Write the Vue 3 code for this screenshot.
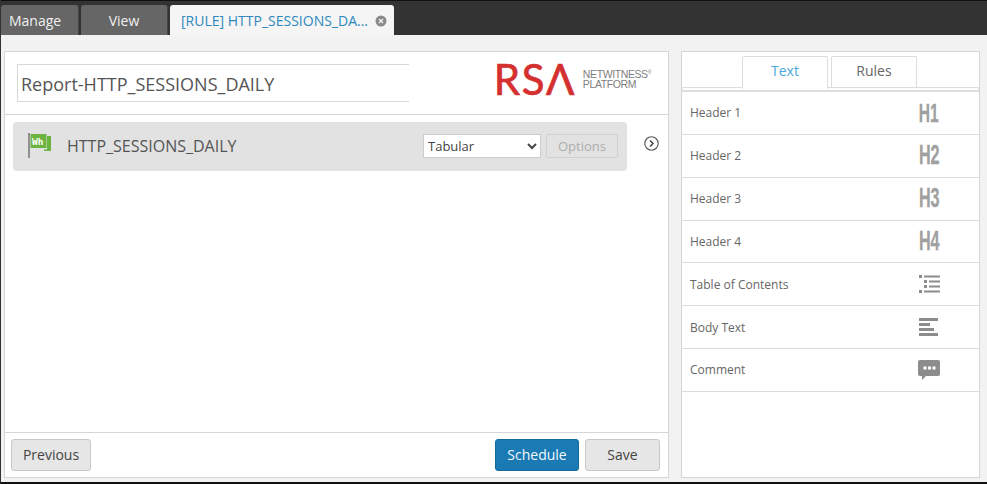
<script setup>
const rows = [
  { label: 'Header 1', h: 'H1', small: true },
  { label: 'Header 2', h: 'H2' },
  { label: 'Header 3', h: 'H3' },
  { label: 'Header 4', h: 'H4' },
  { label: 'Table of Contents', icon: 'toc' },
  { label: 'Body Text', icon: 'body' },
  { label: 'Comment', icon: 'comment' },
]
</script>

<template>
  <div class="page">
    <nav class="topbar">
      <div class="tab dark manage">Manage</div>
      <div class="tab dark view">View</div>
      <div class="tab active">
        <span>[RULE] HTTP_SESSIONS_DA...</span>
        <svg class="close" width="12" height="12" viewBox="0 0 12 12">
          <circle cx="6" cy="6" r="5.5" fill="#8a8a8a" />
          <path d="M4 4l4 4M8 4l-4 4" stroke="#eee" stroke-width="1.4" />
        </svg>
      </div>
    </nav>
    <main class="content">
      <section class="panel left">
        <header class="head">
          <div class="title">Report-HTTP_SESSIONS_DAILY</div>
          <div class="logo">
            <span class="rsa">RSΛ</span>
            <span class="nw">NETWITNESS<sup>®</sup><br />PLATFORM</span>
          </div>
        </header>
        <div class="work">
          <div class="strip">
            <div class="item">
              <svg class="flag" width="24" height="25" viewBox="0 0 24 25">
                <rect x="0" y="0" width="2" height="25" fill="#8f8f8f" />
                <path d="M19 3h4v15H16v-1.500h3z" fill="#6db33f" />
                <rect x="2.500" y="1" width="16" height="14" fill="#6db33f" />
                <text x="4" y="11.500" class="wh">Wh</text>
              </svg>
              <span class="name">HTTP_SESSIONS_DAILY</span>
              <select class="sel"><option>Tabular</option></select>
              <button class="opt" type="button" disabled>Options</button>
            </div>
            <svg class="chev" width="15" height="15" viewBox="0 0 15 15">
              <circle cx="7.500" cy="7.500" r="6.700" fill="none" stroke="#555" stroke-width="1.100" />
              <path d="M6 4.500l3 3-3 3" fill="none" stroke="#444" stroke-width="1.500" />
            </svg>
          </div>
        </div>
        <footer class="foot">
          <button class="btn" type="button">Previous</button>
          <span class="spacer"></span>
          <button class="btn primary" type="button">Schedule</button>
          <button class="btn save" type="button">Save</button>
        </footer>
      </section>
      <aside class="panel right">
        <div class="rtabs">
          <div class="rtab on">Text</div>
          <div class="rtab">Rules</div>
        </div>
        <div class="rule"></div>
        <ul class="list">
          <li v-for="r in rows" :key="r.label" class="row">
            <span class="lbl">{{ r.label }}</span>
            <span class="ic">
              <span v-if="r.h" class="hh" :class="{ sm: r.small }">{{ r.h }}</span>
              <svg v-else-if="r.icon === 'toc'" width="21" height="18" viewBox="0 0 21 18" fill="#8c8c8c">
                <rect x="0" y="0" width="3" height="3" /><rect x="5" y="0.500" width="16" height="2" />
                <rect x="5" y="5" width="3" height="3" /><rect x="10" y="5.500" width="11" height="2" />
                <rect x="5" y="10" width="3" height="3" /><rect x="10" y="10.500" width="11" height="2" />
                <rect x="0" y="15" width="3" height="3" /><rect x="5" y="15.500" width="16" height="2" />
              </svg>
              <svg v-else-if="r.icon === 'body'" width="20" height="18" viewBox="0 0 20 18" fill="#8c8c8c">
                <rect x="0" y="0" width="19" height="3" /><rect x="0" y="5" width="11" height="3" />
                <rect x="0" y="10" width="15" height="3" /><rect x="0" y="15" width="19" height="3" />
              </svg>
              <svg v-else width="22" height="20" viewBox="0 0 22 20">
                <path d="M2 0h18a2 2 0 0 1 2 2v12a2 2 0 0 1-2 2H8l-4 4v-4H2a2 2 0 0 1-2-2V2a2 2 0 0 1 2-2z" fill="#8c8c8c" />
                <rect x="5.500" y="6.500" width="3" height="3" fill="#fff" /><rect x="10" y="6.500" width="3" height="3" fill="#fff" /><rect x="14.500" y="6.500" width="3" height="3" fill="#fff" />
              </svg>
            </span>
          </li>
        </ul>
      </aside>
    </main>
  </div>
</template>

<style>
html, body { margin: 0; background: #000; }
</style>

<style scoped>
.page {
  width: 987px; height: 484px; box-sizing: border-box;
  border-bottom: 2px solid #111; border-left: 1px solid #333;
  background: #f2f2f2; display: flex; flex-direction: column;
  font-family: "Open Sans", "Noto Sans", sans-serif; overflow: hidden;
}
.topbar {
  height: 35px; box-sizing: border-box; flex: none; padding-top: 4px;
  background: #333; border-top: 1px solid #111; display: flex; align-items: stretch;
}
.tab { box-sizing: border-box; font-size: 14px; display: flex; align-items: center; border-radius: 3px 3px 0 0; }
.dark { background: #666; color: #f0f0f0; border-right: 1px solid #444; font-weight: 400; }
.manage { width: 78px; padding-left: 8px; }
.view { width: 87px; margin-left: 2px; justify-content: center; }
.active {
  width: 224px; margin-left: 2px; background: #f5f5f5; color: #2e88bd;
  padding-left: 11px; position: relative; height: 31px;
}
.close { margin-left: 7px; }
.content { flex: 1; display: flex; padding: 16px 7px 4px 3px; gap: 12px; min-height: 0; }
.panel { background: #fff; border: 1px solid #d6d6d6; box-sizing: border-box; display: flex; flex-direction: column; }
.left { width: 665px; }
.right { width: 299px; }
.head {
  height: 63px; flex: none; box-sizing: border-box; border-bottom: 1px solid #d6d6d6;
  display: flex; align-items: center; justify-content: space-between; padding: 0 17px 1px 12px;
}
.title {
  width: 392px; height: 38px; box-sizing: border-box;
  border: 1px solid #d8d8d8; border-right: 0; padding-left: 3px; line-height: 39px;
  font-size: 18px; color: #555;
}
.logo { display: flex; align-items: center; gap: 7px; margin-bottom: 8px; }
.rsa {
  font-family: Lato, "Open Sans", sans-serif; font-size: 42px; line-height: 1; color: #d3302f;
  font-weight: 400; letter-spacing: 1.500px; -webkit-text-stroke: .7px #d3302f;
}
.nw { font-family: "Liberation Sans", sans-serif; font-size: 10.500px; line-height: 10px; color: #808080; letter-spacing: -.4px; }
.nw sup { font-size: 5px; line-height: 0; }
.work { flex: 1; padding: 7px 8px; min-height: 0; }
.strip { display: flex; align-items: flex-start; }
.item {
  width: 614px; height: 49px; background: #e2e2e2; border-radius: 4px; box-sizing: border-box;
  display: flex; align-items: center; padding: 0 9px 2px 15px; flex: none;
}
.flag { flex: none; }
.wh { font: bold 9.500px "DejaVu Sans Mono", monospace; fill: #fff; }
.name { margin-left: 15px; font-size: 16px; color: #555; flex: 1; }
.sel {
  width: 118px; height: 24px; box-sizing: border-box; background: #fff; border: 1px solid #ccc;
  font: 13px "Open Sans", sans-serif; color: #444; padding: 0;
}
.opt {
  width: 72px; height: 24px; margin-left: 5px; box-sizing: border-box;
  background: #e2e2e2; border: 1px solid #d0d0d0; border-radius: 2px;
  font: 13px "Open Sans", sans-serif; color: #adadad; padding: 0;
}
.chev { margin: 14px 0 0 17px; flex: none; }
.foot {
  height: 45px; flex: none; box-sizing: border-box; border-top: 1px solid #d6d6d6;
  display: flex; align-items: flex-start; padding: 6px 8px 0 6px;
}
.spacer { flex: 1; }
.btn {
  height: 32px; width: 80px; box-sizing: border-box; border: 1px solid #c8c8c8; border-radius: 3px;
  background: #e6e6e6; color: #444; font: 14px "Open Sans", sans-serif; padding: 0 0 2px;
}
.primary { width: 84px; background: #1a7ab3; border-color: #156a9c; color: #f2f8fc; }
.save { width: 75px; margin-left: 6px; }
.rtabs { display: flex; height: 35px; flex: none; padding: 4px 0 0 60px; box-sizing: border-box; gap: 3px; }
.rtab {
  width: 86px; box-sizing: border-box; height: 31px; border: 1px solid #ddd; border-bottom: 0;
  border-radius: 2px 2px 0 0; text-align: center; line-height: 28px; font-size: 14px; color: #666;
}
.rtab.on { color: #4aa8dc; position: relative; height: 33px; background: #fff; }
.rule { height: 5px; flex: none; box-sizing: border-box; border: 1px solid #e2e2e2; border-top: 1px solid #ddd; border-bottom: 2px solid #ddd; }
.list { list-style: none; margin: 0; padding: 0; }
.row {
  height: 42.850px; box-sizing: border-box; border-bottom: 1px solid #dcdcdc;
  display: flex; align-items: center; padding: 0 39px 0 8px; justify-content: space-between;
}
.lbl { font-size: 12px; color: #666; }
.ic { width: 22px; display: flex; justify-content: center; align-items: center; }
.hh {
  font: bold 27px "Liberation Sans", sans-serif; color: #a0a0a0; display: inline-block;
  transform: scaleX(.6); line-height: 1; -webkit-text-stroke: .3px #a0a0a0;
}
.hh.sm { font-size: 26px; }
</style>
